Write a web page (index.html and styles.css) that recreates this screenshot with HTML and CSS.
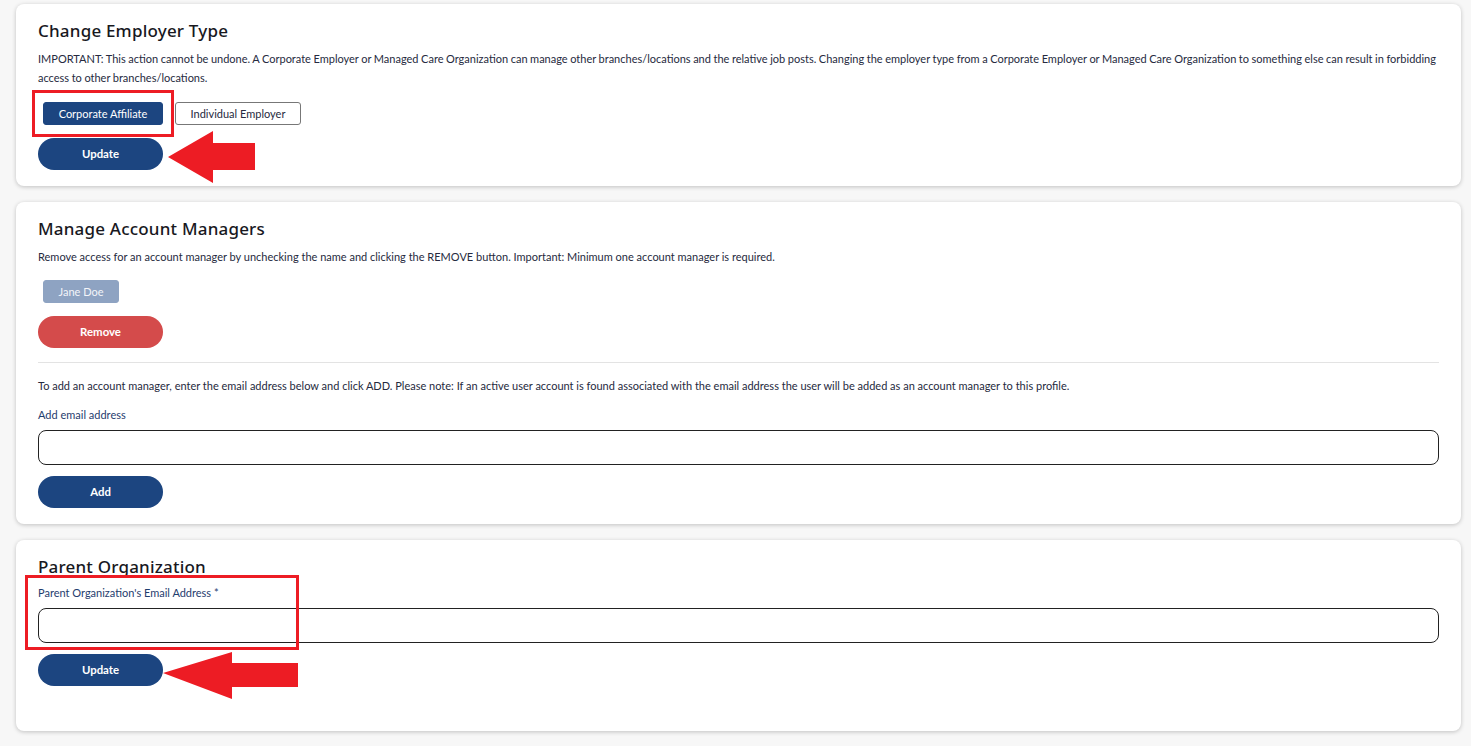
FILE: index.html
```html
<!DOCTYPE html>
<html lang="en">
<head>
    <meta charset="UTF-8">
    <title>Employer Settings</title>
    <link rel="stylesheet" href="styles.css">
</head>
<body>

    <div class="page">

        <!-- Change employer type -->
        <section class="card card-type">
            <h2>Change Employer Type</h2>
            <p class="note">IMPORTANT: This action cannot be undone. A Corporate Employer or Managed Care Organization can manage other branches/locations and the relative job posts. Changing the employer type from a Corporate Employer or Managed Care Organization to something else can result in forbidding access to other branches/locations.</p>
            <div class="type-options">
                <button class="opt opt-active">Corporate Affiliate</button>
                <button class="opt opt-plain">Individual Employer</button>
            </div>
            <button class="pill pill-blue">Update</button>

            <div class="mark mark-1"></div>
            <svg class="arrow arrow-1" width="88" height="52" viewBox="0 0 88 52">
                <polygon points="0,26 45,0 45,12 87,12 87,39 45,39 45,52" fill="#ed1c24"/>
            </svg>
        </section>

        <!-- Account managers -->
        <section class="card card-managers">
            <h2>Manage Account Managers</h2>
            <p class="note">Remove access for an account manager by unchecking the name and clicking the REMOVE button. Important: Minimum one account manager is required.</p>
            <div class="managers">
                <button class="opt opt-muted">Jane Doe</button>
            </div>
            <button class="pill pill-red">Remove</button>
            <hr class="divider">
            <p class="note">To add an account manager, enter the email address below and click ADD. Please note: If an active user account is found associated with the email address the user will be added as an account manager to this profile.</p>
            <label class="field-label">Add email address</label>
            <input class="field" type="text">
            <button class="pill pill-blue">Add</button>
        </section>

        <!-- Parent organization -->
        <section class="card card-parent">
            <h2>Parent Organization</h2>
            <label class="field-label">Parent Organization's Email Address *</label>
            <input class="field" type="text">
            <button class="pill pill-blue">Update</button>

            <div class="mark mark-2"></div>
            <svg class="arrow arrow-2" width="136" height="47" viewBox="0 0 136 47">
                <polygon points="0,21 69,0 69,11 135,11 135,35 69,35 69,47" fill="#ed1c24"/>
            </svg>
        </section>

    </div>

</body>
</html>
```

FILE: styles.css
```css
body {
    margin: 0;
    background: #f7f7f7;
    font-family: 'Lato', 'Open Sans', Arial, sans-serif;
    color: #262a40;
}

.page {
    display: flex;
    flex-direction: column;
    gap: 16px;
    padding: 4px 10px 15px 16px;
}

.card {
    position: relative;
    background: #fff;
    border-radius: 8px;
    box-shadow: 0 1px 4px rgba(0, 0, 0, 0.22);
    padding: 16px 22px 16px 22px;
    display: flex;
    flex-direction: column;
    align-items: flex-start;
}

.card h2 {
    margin: 0 0 7px 0;
    font-family: 'Noto Sans', 'Open Sans', Arial, sans-serif;
    font-weight: 500;
    font-size: 17px;
    line-height: 22px;
    color: #18181e;
    letter-spacing: 0.2px;
}

.note {
    margin: 0;
    font-size: 11px;
    line-height: 19px;
    align-self: stretch;
}

.card-type .note {
    word-spacing: -0.25px;
}

.type-options {
    display: flex;
    gap: 12px;
    margin: 15px 0 13px 5px;
}

.opt {
    font-family: inherit;
    font-size: 11px;
    height: 23px;
    border-radius: 3px;
    border: 1px solid #777;
    background: #fff;
    color: #262a40;
    padding: 0;
    cursor: pointer;
}

.opt-active {
    width: 120px;
    background: #1c4580;
    border-color: #1c4580;
    color: #fff;
}

.opt-plain { width: 126px; }

.opt-muted {
    width: 76px;
    background: #8ea3c2;
    border-color: #8ea3c2;
    color: #f3f5f9;
}

.pill {
    font-family: inherit;
    font-weight: 700;
    font-size: 11.4px;
    width: 125px;
    height: 32px;
    border: none;
    border-radius: 16px;
    color: #fff;
    padding: 0 0 2px 0;
    cursor: pointer;
}

.pill-blue { background: #1c4580; }
.pill-red { background: #d44b4b; }

.managers {
    margin: 14px 0 13px 5px;
}

.divider {
    align-self: stretch;
    border: none;
    border-top: 1px solid #e3e3e3;
    margin: 14px 0 13px 0;
}

.field-label {
    font-size: 11px;
    line-height: 16px;
    color: #1f3d6e;
    margin: 12px 0 7px 0;
}

.card-parent .field-label {
    margin-top: 0;
}

.field {
    align-self: stretch;
    height: 35px;
    box-sizing: border-box;
    border: 1px solid #222;
    border-radius: 8px;
    margin: 0 0 11px 0;
}

.card-parent { padding-bottom: 45px; }

/* annotations */
.mark {
    position: absolute;
    border: 3px solid #ed1c24;
    box-sizing: border-box;
    pointer-events: none;
}

.mark-1 {
    left: 16px;
    top: 86px;
    width: 142px;
    height: 47px;
}

.mark-2 {
    left: 9px;
    top: 35px;
    width: 274px;
    height: 75px;
}

.arrow {
    position: absolute;
    pointer-events: none;
}

.arrow-1 {
    left: 152px;
    top: 127px;
}

.arrow-2 {
    left: 147px;
    top: 112px;
}
```
